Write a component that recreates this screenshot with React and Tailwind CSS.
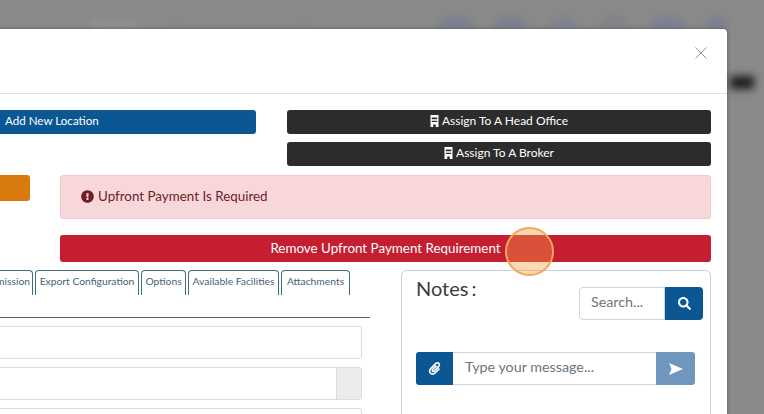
import { FaExclamationCircle, FaPaperclip, FaSearch } from 'react-icons/fa';

const OfficeIcon = () => (
  <svg width="9" height="12" viewBox="0 0 9 12" fill="white" fillRule="evenodd">
    <path d="M0.5 0 H8.5 V12 H5.8 V9.5 H3.2 V12 H0.5 Z M1.8 2.6 V4.2 H7.2 V2.6 Z M1.8 5.8 V7 H7.2 V5.8 Z" />
  </svg>
);

const Tab = ({ children, className = '' }) => (
  <div className={`h-[25px] border border-b-0 border-[#3f6f80] rounded-t-[4px] text-[10.3px] leading-[21px] text-center text-[#3f6478] whitespace-nowrap ${className}`}>
    {children}
  </div>
);

const BlurredBackdrop = () => (
  <div className="absolute inset-0 blur-[4px]">
    <div className="absolute left-[92px] top-[23px] w-[46px] h-[7px] bg-[#969696]" />
    <div className="absolute left-[170px] top-[26px] w-[140px] h-[4px] bg-[#80838a]" />
    <div className="absolute left-[437px] top-[16px] w-[38px] h-[14px] rounded-t-full bg-[#7b8090]" />
    <div className="absolute left-[492px] top-[16px] w-[36px] h-[14px] rounded-t-full bg-[#7b8090]" />
    <div className="absolute left-[548px] top-[16px] w-[30px] h-[14px] rounded-t-full bg-[#7f8290]" />
    <div className="absolute left-[600px] top-[16px] w-[30px] h-[14px] rounded-t-full bg-[#828288]" />
    <div className="absolute left-[650px] top-[16px] w-[36px] h-[14px] rounded-t-full bg-[#7b8090]" />
    <div className="absolute left-[706px] top-[15px] w-[22px] h-[15px] rounded-t-full bg-[#7b8090]" />
    <div className="absolute left-[730px] top-[76px] w-[24px] h-[13px] bg-[#1c1c1c]" />
  </div>
);

export default function App() {
  return (
    <div className="relative w-[764px] h-[414px] overflow-hidden bg-[#8a8a8a] font-['Lato',sans-serif]">
      <BlurredBackdrop />

      <div className="relative flex justify-end h-full pt-[29px] pr-[37px]">
        <div className="shrink-0 w-[1000px] h-[500px] bg-white rounded-t-[4px] shadow-[0_0_4px_rgba(0,0,0,0.35)]">
          {/* header */}
          <div className="flex justify-end items-start h-[65px] border-b border-[#dee2e6] pt-[18px] pr-[20px]">
            <svg width="12" height="12" viewBox="0 0 12 12" stroke="#949494" strokeWidth="1" fill="none">
              <path d="M0.5 0.5 L11.5 11.5 M11.5 0.5 L0.5 11.5" />
            </svg>
          </div>

          <div className="pt-[16px] pr-[16px]">
            {/* assign buttons */}
            <div className="flex gap-[31px]">
              <div className="flex-1">
                <div className="h-[24px] rounded-[3px] bg-[#0b5794] text-white text-[11.6px] leading-[21px] pl-[278px]">
                  Add New Location
                </div>
              </div>
              <div className="w-[424px] flex flex-col gap-[8px]">
                <div className="h-[24px] pb-[2px] rounded-[3px] bg-[#2c2c2c] text-white text-[12px] flex items-center justify-center gap-[3px]">
                  <OfficeIcon />
                  Assign To A Head Office
                </div>
                <div className="h-[24px] pb-[2px] rounded-[3px] bg-[#2c2c2c] text-white text-[12px] flex items-center justify-center gap-[3px]">
                  <OfficeIcon />
                  Assign To A Broker
                </div>
              </div>
            </div>

            {/* upfront payment */}
            <div className="flex gap-[30px] mt-[9px]">
              <div className="w-[303px] h-[26px] rounded-[3px] bg-[#d97a0e]" />
              <div className="flex-1">
                <div className="h-[44px] pb-[2px] rounded-[3px] border border-[#f5c6cb] bg-[#f8d7da] text-[#721c24] text-[13.4px] flex items-center gap-[4px] pl-[20px]">
                  <FaExclamationCircle className="w-[13px] h-[13px]" />
                  Upfront Payment Is Required
                </div>
                <div className="mt-[16px] h-[27px] pb-[1px] rounded-[3px] bg-[#c41e30] text-white text-[13.4px] flex items-center justify-center">
                  Remove Upfront Payment Requirement
                </div>
              </div>
            </div>

            {/* tabs + notes */}
            <div className="flex gap-[31px] mt-[8px]">
              <div className="flex-1">
                <div className="flex justify-end gap-[2px] pr-[20px]">
                  <Tab className="w-[60px] border-l-0">Commission</Tab>
                  <Tab className="w-[104px]">Export Configuration</Tab>
                  <Tab className="w-[45px]">Options</Tab>
                  <Tab className="w-[91px]">Available Facilities</Tab>
                  <Tab className="w-[69px]">Attachments</Tab>
                </div>
                <div className="mt-[22px] h-px bg-[#4a6572]" />
                <div className="mr-[8px] mt-[8px] h-[33px] rounded-[3px] border border-[#dcdcdc]" />
                <div className="mr-[8px] mt-[8px] h-[33px] rounded-[3px] border border-[#dcdcdc] flex justify-end">
                  <div className="w-[25px] bg-[#ececec] border-l border-[#dcdcdc]" />
                </div>
                <div className="mr-[8px] mt-[8px] h-[33px] rounded-[3px] border border-[#dcdcdc]" />
              </div>

              <div className="w-[310px] h-[200px] rounded-[6px] border border-[#cfcfcf] pl-[14px] pr-[7px]">
                <div className="flex justify-between">
                  <div className="text-[20px] leading-[24px] mt-[5px] text-[#3c3c3c] [word-spacing:-2px]">Notes :</div>
                  <div className="flex mt-[16px] h-[33px]">
                    <div className="w-[86px] rounded-l-[4px] border border-[#cfd4da] text-[14.3px] leading-[28px] pl-[11px] text-[#6c757d]">Search...</div>
                    <div className="w-[38px] rounded-r-[4px] bg-[#0b5794] flex items-center justify-center">
                      <FaSearch className="w-[13px] h-[13px] text-white" />
                    </div>
                  </div>
                </div>
                <div className="flex mt-[32px] h-[33px] w-[279px]">
                  <div className="w-[37px] rounded-l-[3px] bg-[#0b5794] flex items-center justify-center">
                    <FaPaperclip className="w-[13px] h-[13px] text-white" />
                  </div>
                  <div className="flex-1 border-y border-[#cfd4da] text-[14.3px] leading-[28px] pl-[12px] text-[#6c757d]">Type your message...</div>
                  <div className="w-[39px] rounded-r-[3px] bg-[#6f96bd] flex items-center justify-center">
                    <svg width="14" height="12" viewBox="0 0 14 12" fill="white">
                      <path d="M0 0 L14 6 L0 12 L2.5 6 Z" />
                    </svg>
                  </div>
                </div>
              </div>
            </div>
          </div>
        </div>
      </div>

      {/* click highlight */}
      <div className="absolute left-[505px] top-[227px] w-[49px] h-[49px] rounded-full border-2 border-[#f5a65b] bg-[#f89d45]/40" />
    </div>
  );
}
